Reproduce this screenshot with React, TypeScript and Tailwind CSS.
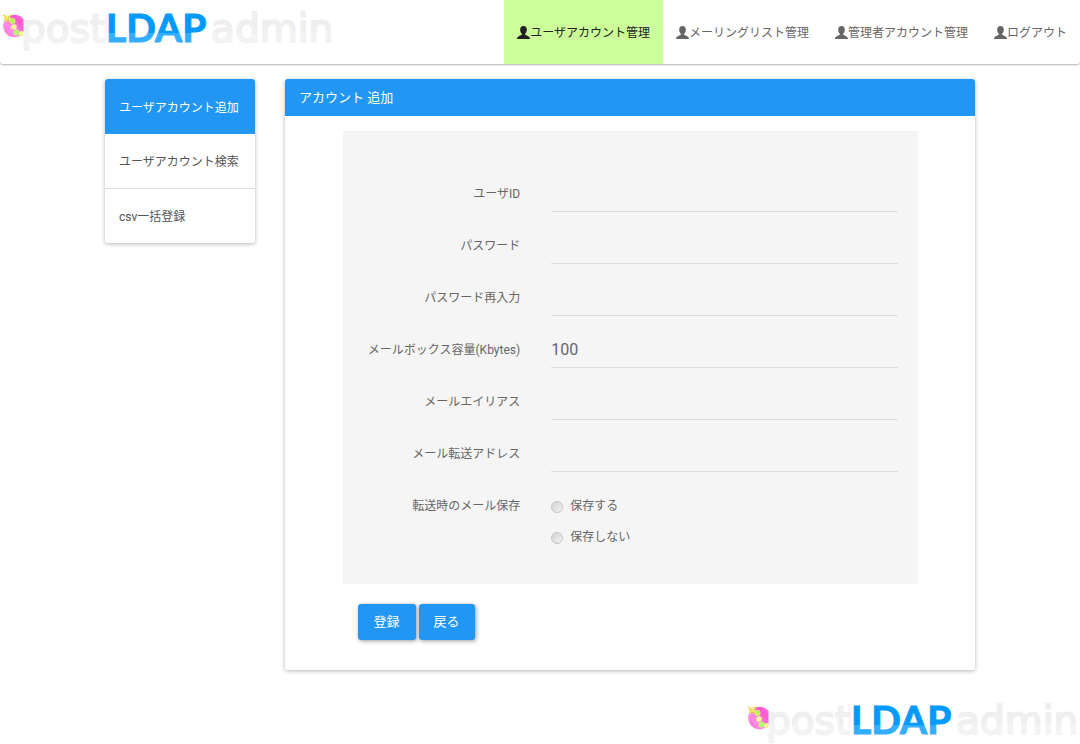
import React, { useId, useState } from 'react';
import clsx from 'clsx';

const navItems = ['ユーザアカウント管理', 'メーリングリスト管理', '管理者アカウント管理', 'ログアウト'];

const menuItems = ['ユーザアカウント追加', 'ユーザアカウント検索', 'csv一括登録'];

const fields = [
  { name: 'uid', label: 'ユーザID', type: 'text', value: '' },
  { name: 'password', label: 'パスワード', type: 'password', value: '' },
  { name: 'passwordConfirm', label: 'パスワード再入力', type: 'password', value: '' },
  { name: 'quota', label: 'メールボックス容量(Kbytes)', type: 'text', value: '100' },
  { name: 'alias', label: 'メールエイリアス', type: 'text', value: '' },
  { name: 'forward', label: 'メール転送アドレス', type: 'text', value: '' },
];

const keepOptions = [
  { value: 'keep', label: '保存する' },
  { value: 'discard', label: '保存しない' },
];

const Logo = () => {
  const id = useId();
  return (
    <svg viewBox="0 0 335 52" className="block h-[52px] w-[335px]" role="img" aria-label="postLDAPadmin">
      <defs>
        <linearGradient id={`${id}ball`} x1="0" y1="1" x2="1" y2="0">
          <stop offset="0" stopColor="#ff6ad6" />
          <stop offset="0.35" stopColor="#ff8ee2" />
          <stop offset="0.7" stopColor="#ff55cf" />
          <stop offset="1" stopColor="#ff7fdd" />
        </linearGradient>
        <linearGradient id={`${id}blue`} gradientUnits="userSpaceOnUse" x1="0" y1="0" x2="0" y2="52">
          <stop offset="0.63" stopColor="#0099ff" />
          <stop offset="0.63" stopColor="#33adff" />
        </linearGradient>
        <linearGradient id={`${id}gray`} gradientUnits="userSpaceOnUse" x1="0" y1="0" x2="0" y2="52">
          <stop offset="0.63" stopColor="#efefef" />
          <stop offset="0.63" stopColor="#f3f3f3" />
        </linearGradient>
      </defs>
      <circle cx="14.500" cy="26" r="11.300" fill={`url(#${id}ball)`} />
      <circle cx="12.500" cy="21" r="3" fill="#bff55c" />
      <circle cx="14" cy="27" r="2.800" fill="#f7f59a" />
      <circle cx="16.500" cy="32.500" r="3" fill="#b9f47c" />
      <circle cx="21.500" cy="33.500" r="2.600" fill="#f7f58c" />
      <circle cx="7" cy="18.500" r="3.300" fill="#f8ee7d" />
      <path d="M3.500 14.500l2 2.500M11 14.500l-2 2.500" stroke="#efdc55" strokeWidth="1.500" />
      <path d="M6 17.500v1M8.500 17.500v1M5.500 20q1.800 1 3.500 0" stroke="#b88f2a" strokeWidth="0.800" fill="none" />
      <g fontFamily='"DejaVu Sans", sans-serif' fontSize="39" fill={`url(#${id}gray)`} stroke={`url(#${id}gray)`} strokeWidth="2">
        <text x="21" y="42">post</text>
        <text x="211" y="42">admin</text>
      </g>
      <text x="106" y="42" fontFamily="Lato, sans-serif" fontWeight="700" fontSize="39" fill={`url(#${id}blue)`} stroke={`url(#${id}blue)`} strokeWidth="1">
        LDAP
      </text>
    </svg>
  );
};

const UserIcon = () => (
  <svg viewBox="0 0 14 13" className="h-[13px] w-[13px] shrink-0" preserveAspectRatio="none" fill="currentColor" aria-hidden="true">
    <path d="M7 0C4.600 0 3.400 1.500 3.400 3.600c0 1.700.6 3.300 1.900 4.200v.7C4.700 9.500 0 9.700 0 13h14c0-3.300-4.700-3.500-5.300-4.500v-.7c1.300-.9 1.900-2.500 1.900-4.200C10.600 1.500 9.400 0 7 0z" />
  </svg>
);

const Header = () => (
  <header className="flex h-16 items-stretch justify-between rounded-[3px] bg-white shadow-[0_1px_2px_rgba(0,0,0,0.3)]">
    <a href="#top"><Logo /></a>
    <nav className="flex">
      {navItems.map((item, i) => (
        <a
          key={item}
          href="#nav"
          className={clsx(
            'flex items-center px-[13px] text-xs whitespace-nowrap',
            i === 0 ? 'bg-[#ccff99] text-[#212121]' : 'text-[#666666]'
          )}
        >
          <UserIcon />
          <span className="pt-0.5">{item}</span>
        </a>
      ))}
    </nav>
  </header>
);

const SideMenu = () => (
  <nav className="w-[150px] shrink-0 overflow-hidden rounded-[3px] bg-white shadow-[0_1px_4px_rgba(0,0,0,0.3)]">
    {menuItems.map((item, i) => (
      <a
        key={item}
        href="#menu"
        className={clsx(
          'flex items-center px-[14px] pt-0.5 text-xs whitespace-nowrap',
          i === 0 && 'h-[55px] bg-[#2196f3] text-white',
          i === 1 && 'h-[54px] text-[#555555]',
          i > 1 && 'h-[55px] border-t border-[#dddddd] text-[#555555]'
        )}
      >
        {item}
      </a>
    ))}
  </nav>
);

const AccountForm = () => {
  const [values, setValues] = useState<Record<string, string>>(
    Object.fromEntries(fields.map(f => [f.name, f.value]))
  );
  const [keep, setKeep] = useState('');

  return (
    <form className="mx-auto w-10/12 pt-[15px] pb-[30px]" onSubmit={e => e.preventDefault()}>
      <div className="bg-[#f5f5f5] pt-11 pb-9">
        {fields.map(f => (
          <div key={f.name} className="mb-[15px] flex h-[37px]">
            <label htmlFor={f.name} className="w-1/3 pr-[14px] text-right text-xs leading-[38px] whitespace-nowrap">
              {f.label}
            </label>
            <div className="w-2/3 pr-[19px] pl-[17px]">
              <input
                id={f.name}
                name={f.name}
                type={f.type}
                value={values[f.name]}
                onChange={e => setValues({ ...values, [f.name]: e.target.value })}
                className="h-[37px] w-full border-b border-[#dddddd] bg-transparent text-base text-[#666666] outline-none focus:border-[#2196f3]"
              />
            </div>
          </div>
        ))}

        <fieldset className="flex" aria-labelledby="keep-label">
          <div id="keep-label" className="w-1/3 pr-[14px] text-right text-xs leading-[38px]">転送時のメール保存</div>
          <div className="flex w-2/3 flex-col gap-[9px] pt-2 pl-[17px]">
            {keepOptions.map(o => (
              <label key={o.value} className="flex h-[22px] items-center gap-[7px] text-xs">
                <input
                  type="radio"
                  name="keep"
                  value={o.value}
                  checked={keep === o.value}
                  onChange={() => setKeep(o.value)}
                  className="mt-0.5 size-3 appearance-none rounded-full border border-[#c4c4c4] bg-linear-to-br from-[#d2d2d2] to-[#f4f4f4] checked:bg-[#2196f3]"
                />
                {o.label}
              </label>
            ))}
          </div>
        </fieldset>
      </div>

      <div className="mt-5 flex gap-[3px] pl-[15px]">
        <button type="submit" className="h-9 rounded-[3px] bg-[#2196f3] px-4 text-[13px] text-white shadow-[1px_1px_4px_rgba(0,0,0,0.4)]">
          登録
        </button>
        <button type="button" className="h-9 rounded-[3px] bg-[#2196f3] px-[15px] text-[13px] text-white shadow-[1px_1px_4px_rgba(0,0,0,0.4)]">
          戻る
        </button>
      </div>
    </form>
  );
};

export default function App() {
  return (
    <div className="bg-white font-[Roboto,'Noto_Sans_CJK_JP',sans-serif] text-[#666666]" lang="ja">
      <Header />

      <main className="mx-auto mt-[15px] flex max-w-[870px] items-start gap-[30px]">
        <SideMenu />
        <section className="min-w-0 flex-1 overflow-hidden rounded-[3px] bg-white shadow-[0_1px_4px_rgba(0,0,0,0.3)]">
          <h1 className="bg-[#2196f3] px-[14px] text-[13px] leading-[37px] text-white">アカウント 追加</h1>
          <AccountForm />
        </section>
      </main>

      <footer className="mt-[22px] flex justify-end">
        <Logo />
      </footer>
    </div>
  );
}
